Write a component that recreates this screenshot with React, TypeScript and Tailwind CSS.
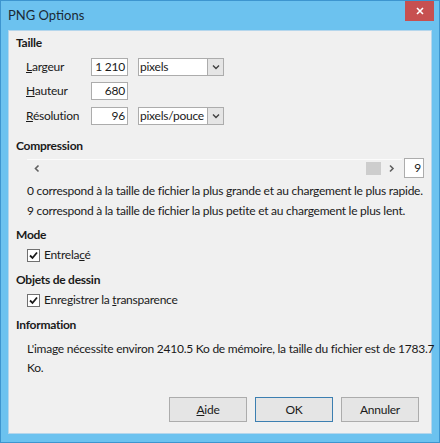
import React from 'react';

const font = { fontFamily: 'Lato, "Noto Sans", sans-serif' };

function Chevron() {
    return (
        <svg width="8" height="6" viewBox="0 0 8 6" fill="none">
            <path d="M1 1.5 L4 4.5 L7 1.5" stroke="#404040" strokeWidth="1.4" />
        </svg>
    );
}

function Select({ value }: { value: string }) {
    return (
        <div className="ml-[10px] flex h-[18px] w-[86px] border border-[#acacac] bg-white">
            <div className="flex flex-1 items-center overflow-hidden whitespace-nowrap pl-[1px] text-[12px]">{value}</div>
            <div className="flex w-[16px] items-center justify-center border-l border-[#acacac] bg-[#e5e5e5]">
                <Chevron />
            </div>
        </div>
    );
}

function NumBox({ value }: { value: string }) {
    return (
        <div className="flex h-[18px] w-[37px] items-center justify-end border border-[#acacac] bg-white pr-[2px] text-[12px]">
            {value}
        </div>
    );
}

function Check() {
    return (
        <div className="flex h-[13px] w-[13px] items-center justify-center border border-[#707070] bg-white">
            <svg width="9" height="9" viewBox="0 0 9 9" fill="none">
                <path d="M1 4.5 L3.5 7 L8 1.5" stroke="#1a1a1a" strokeWidth="1.8" />
            </svg>
        </div>
    );
}

function Heading({ children, mt }: { children: React.ReactNode; mt: string }) {
    return <div className={`flex h-[20px] items-center pl-[7px] text-[12px] font-bold ${mt}`}>{children}</div>;
}

export default function App() {
    return (
        <div className="flex h-[443px] w-[440px] flex-col border border-[#3d95cf] bg-[#6cc2ef] text-[#1a1a1a]" style={font}>
            <div className="flex h-[29px] items-start justify-between">
                <div className="pl-[7px] pt-[5px] text-[13px] leading-[18px] text-[#1b2a35]">PNG Options</div>
                <div className="mr-[5px] flex h-[20px] w-[29px] items-center justify-center bg-[#c75050]">
                    <svg width="10" height="10" viewBox="0 0 10 10">
                        <path d="M2 2 L8 8 M8 2 L2 8" stroke="white" strokeWidth="1.6" />
                    </svg>
                </div>
            </div>

            <div className="mx-[7px] flex h-[404px] flex-col border border-[#b5d6ec] bg-[#f0f0f0] text-[12px] tracking-[-0.25px]">
                <Heading mt="mt-[2px]">Taille</Heading>

                <div className="mt-[5px] flex h-[18px] items-center pl-[17px]">
                    <div className="w-[65px]"><u>L</u>argeur</div>
                    <NumBox value="1 210" />
                    <Select value="pixels" />
                </div>
                <div className="mt-[6px] flex h-[18px] items-center pl-[17px]">
                    <div className="w-[65px]"><u>H</u>auteur</div>
                    <NumBox value="680" />
                </div>
                <div className="mt-[7px] flex h-[18px] items-center pl-[17px]">
                    <div className="w-[65px]"><u>R</u>ésolution</div>
                    <NumBox value="96" />
                    <Select value="pixels/pouce" />
                </div>

                <Heading mt="mt-[11px]">Compression</Heading>

                <div className="mt-[2px] flex h-[20px] items-center pl-[18px] pr-[7px]">
                    <div className="flex h-[18px] flex-1 items-center border-t border-[#fbfbfb]">
                        <svg width="17" height="17" viewBox="0 0 17 17" className="ml-[2px]">
                            <path d="M9.5 5.5 L6.5 8.5 L9.5 11.5" stroke="#606060" strokeWidth="1.6" fill="none" />
                        </svg>
                        <div className="flex-1" />
                        <div className="h-[13px] w-[15px] bg-[#cdcdcd]" />
                        <svg width="17" height="17" viewBox="0 0 17 17" className="ml-[2px] mr-[2px]">
                            <path d="M7 5.5 L10 8.5 L7 11.5" stroke="#606060" strokeWidth="1.6" fill="none" />
                        </svg>
                    </div>
                    <div className="ml-[2px] flex h-[20px] w-[20px] items-center justify-end border border-[#acacac] bg-white pr-[2px]">9</div>
                </div>

                <div className="mt-[3px] flex h-[20px] items-center whitespace-nowrap pl-[18px]">
                    0 correspond à la taille de fichier la plus grande et au chargement le plus rapide.
                </div>
                <div className="flex h-[20px] items-center whitespace-nowrap pl-[18px]">
                    9 correspond à la taille de fichier la plus petite et au chargement le plus lent.
                </div>

                <Heading mt="mt-[4px]">Mode</Heading>
                <div className="flex h-[20px] items-center gap-[4px] pl-[18px]">
                    <Check />
                    <span>Entrela<u>c</u>é</span>
                </div>

                <Heading mt="mt-[5px]">Objets de dessin</Heading>
                <div className="flex h-[20px] items-center gap-[4px] pl-[18px]">
                    <Check />
                    <span>Enregistrer la <u>t</u>ransparence</span>
                </div>

                <Heading mt="mt-[5px]">Information</Heading>
                <div className="mt-[4px] whitespace-nowrap pl-[18px] leading-[19px]">
                    L'image nécessite environ 2410.5 Ko de mémoire, la taille du fichier est de 1783.7
                    <br />
                    Ko.
                </div>

                <div className="mt-auto flex justify-end gap-[8px] pb-[11px] pr-[12px]">
                    <button className="h-[25px] w-[78px] border border-[#acacac] bg-[#e5e5e5]"><u>A</u>ide</button>
                    <button className="h-[25px] w-[78px] border border-[#3c7fb1] bg-[#e5e5e5]">OK</button>
                    <button className="h-[25px] w-[78px] border border-[#acacac] bg-[#e5e5e5]">Annuler</button>
                </div>
            </div>
        </div>
    );
}
